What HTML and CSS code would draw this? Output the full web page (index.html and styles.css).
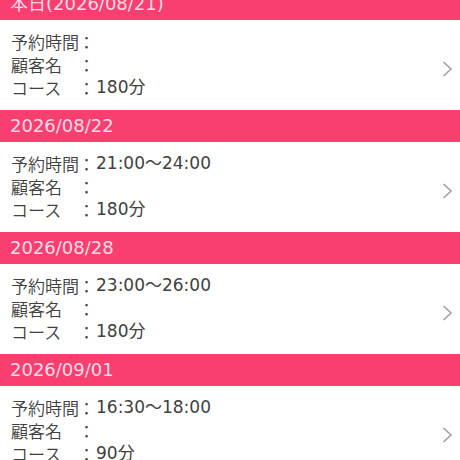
FILE: index.html
```html
<!DOCTYPE html>
<html lang="ja">
<head>
<meta charset="utf-8">
<link rel="stylesheet" href="styles.css">
</head>
<body>
<div class="list">
  <section class="day">
    <div class="day-head">本日(2026/08/21)</div>
    <div class="card">
      <div class="rows">
        <div class="row"><span class="label">予約時間</span><span class="colon">：</span><span class="value"></span></div>
        <div class="row"><span class="label">顧客名</span><span class="colon">：</span><span class="value"></span></div>
        <div class="row"><span class="label">コース</span><span class="colon">：</span><span class="value">180分</span></div>
      </div>
      <svg class="chev" width="11" height="16" viewBox="0 0 11 16"><path d="M1.5 1 L9 8 L1.5 15" fill="none" stroke="#a0a0a0" stroke-width="1.6"/></svg>
    </div>
  </section>
  <section class="day">
    <div class="day-head">2026/08/22</div>
    <div class="card">
      <div class="rows">
        <div class="row"><span class="label">予約時間</span><span class="colon">：</span><span class="value">21:00〜24:00</span></div>
        <div class="row"><span class="label">顧客名</span><span class="colon">：</span><span class="value"></span></div>
        <div class="row"><span class="label">コース</span><span class="colon">：</span><span class="value">180分</span></div>
      </div>
      <svg class="chev" width="11" height="16" viewBox="0 0 11 16"><path d="M1.5 1 L9 8 L1.5 15" fill="none" stroke="#a0a0a0" stroke-width="1.6"/></svg>
    </div>
  </section>
  <section class="day">
    <div class="day-head">2026/08/28</div>
    <div class="card">
      <div class="rows">
        <div class="row"><span class="label">予約時間</span><span class="colon">：</span><span class="value">23:00〜26:00</span></div>
        <div class="row"><span class="label">顧客名</span><span class="colon">：</span><span class="value"></span></div>
        <div class="row"><span class="label">コース</span><span class="colon">：</span><span class="value">180分</span></div>
      </div>
      <svg class="chev" width="11" height="16" viewBox="0 0 11 16"><path d="M1.5 1 L9 8 L1.5 15" fill="none" stroke="#a0a0a0" stroke-width="1.6"/></svg>
    </div>
  </section>
  <section class="day">
    <div class="day-head">2026/09/01</div>
    <div class="card">
      <div class="rows">
        <div class="row"><span class="label">予約時間</span><span class="colon">：</span><span class="value">16:30〜18:00</span></div>
        <div class="row"><span class="label">顧客名</span><span class="colon">：</span><span class="value"></span></div>
        <div class="row"><span class="label">コース</span><span class="colon">：</span><span class="value">90分</span></div>
      </div>
      <svg class="chev" width="11" height="16" viewBox="0 0 11 16"><path d="M1.5 1 L9 8 L1.5 15" fill="none" stroke="#a0a0a0" stroke-width="1.6"/></svg>
    </div>
  </section>
</div>
</body>
</html>
```
FILE: styles.css
```css
html, body {
  margin: 0;
  padding: 0;
  background: #ffffff;
  overflow: hidden;
}
body {
  font-family: "DejaVu Sans", "Noto Sans CJK JP", sans-serif;
  color: #404040;
}
.list {
  margin-top: -12px;
}
.day-head {
  height: 32px;
  line-height: 32px;
  background: #f93f70;
  color: #fcdde6;
  font-size: 18px;
  padding-left: 10px;
  white-space: nowrap;
}
.card {
  height: 90px;
  box-sizing: border-box;
  padding: 10px 7px 0 11px;
  display: flex;
  align-items: center;
}
.rows {
  flex: 1;
  align-self: flex-start;
}
.row {
  display: flex;
  height: 23px;
  line-height: 23px;
  font-size: 17px;
  white-space: nowrap;
}
.label {
  flex: none;
  width: 67px;
  font-family: "Noto Sans CJK JP", sans-serif;
  font-weight: 350;
}
.colon {
  flex: none;
  width: 17px;
  text-align: center;
  font-family: "Noto Sans CJK JP", sans-serif;
  font-weight: 350;
}
.value {
  padding-left: 1px;
}
.chev {
  flex: none;
  margin-top: -3px;
}
```
